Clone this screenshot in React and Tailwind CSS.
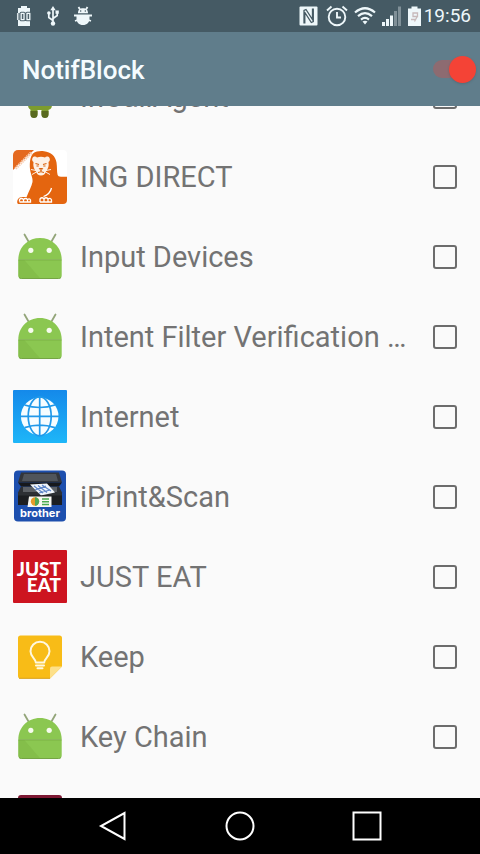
import React, { useLayoutEffect, useRef, useState } from 'react';

const AndroidIcon = () => (
  <svg viewBox="0 0 54 54" className="w-full h-full" aria-hidden="true">
    <path d="M11.5 4.5l4 7M42.5 4.5l-4 7" stroke="#93a579" strokeWidth="1.8" strokeLinecap="round" />
    <path d="M5.3 29.5C5.3 17.5 14.5 8 27 8s21.7 9.5 21.7 21.5z" fill="#8bc751" />
    <path d="M5.3 30h43.4v15.5a3 3 0 0 1-3 3H8.3a3 3 0 0 1-3-3z" fill="#8bc751" />
    <path d="M5.3 30h6l16 18.5h-19a3 3 0 0 1-3-3z" fill="#7cb342" opacity="0.45" />
    <path d="M5.3 29.8h43.4" stroke="#72a83c" strokeWidth="1" />
    <path d="M6 47.5a3 3 0 0 0 2.3 1h37.4a3 3 0 0 0 2.3-1" stroke="#74a544" strokeWidth="1" fill="none" />
    <circle cx="17.8" cy="20.3" r="2.6" fill="#f7fbef" />
    <circle cx="36.2" cy="20.3" r="2.6" fill="#f7fbef" />
  </svg>
);

const OldAndroidIcon = () => (
  <svg viewBox="0 0 54 54" className="w-full h-full" aria-hidden="true">
    <path d="M14 14a13 12 0 0 1 26 0z" fill="#8aa83a" />
    <path d="M15 16h24v19q0 5-5 5H20q-5 0-5-5z" fill="#7d9c2e" />
    <path d="M17.5 36h7v8a3.500 3.500 0 0 1-7 0zM28.5 36h7v8a3.500 3.500 0 0 1-7 0z" fill="#7d9c2e" />
    <path d="M17.5 41h7v3.500a3.500 3.500 0 0 1-7 0zM28.5 41h7v3.500a3.500 3.500 0 0 1-7 0z" fill="#59691f" />
  </svg>
);

const IngIcon = () => (
  <svg viewBox="0 0 54 54" className="w-full h-full" aria-hidden="true">
    <rect width="54" height="54" rx="4" fill="#ffffff" />
    <path d="M0 20V5a5 5 0 0 1 5-5h16z" fill="#e4691f" />
    <path d="M2.5 18.5L18.5 2.5" stroke="#f7cdb2" strokeWidth="3" strokeDasharray="1.5 0.8" />
    <path
      d="M20 3.500C23 1.200 27 .8 31 1.200c7 .6 11.500 5 12.500 11.300.7 4.500.3 9 1 12 .4 1.700 1.500 2.200 3.500 2.200h6V50a4 4 0 0 1-4 4H5.500C3.500 54 4 49.500 6 48c1.500-1 4.500-1 7.500-.8C16 41 18.500 36.500 19.500 32c.7-4-2-8-2.500-13-.5-6 0-12 3-15.500z"
      fill="#e4650f"
    />
    <path
      d="M19.500 8c1-2 3.500-1.800 4.500-.6 2.500-1 5.500-1 8 0 1-1.200 3.500-1.400 4.500.6.800 1.700.3 3.200-1 4 .6 4-.2 6.500-2.200 9-1 3-2.800 4.500-5.300 4.500s-4.300-1.500-5.300-4.500c-2-2.500-2.800-5-2.200-9-1.300-.8-1.800-2.300-1-4z"
      fill="#fdf1e6"
    />
    <path d="M22.5 13.500l3.500 1M33.500 13.500l-3.500 1M23.500 16h2.200M30.300 16h2.200" stroke="#d8620f" strokeWidth="1.1" fill="none" />
    <path d="M26.300 18.500h3.400L28 20.500zM28 20v1.500M25 22.500q3-1.500 6 0" stroke="#d8620f" strokeWidth="1" fill="none" />
    <path d="M23 20.500l-5-1M23.500 22l-4.500 2.500M33 20.500l5-1M32.500 22l4.500 2.500" stroke="#fff" strokeWidth="0.9" />
    <path
      d="M38.500 38c-1 4.500-4 7-8 8.500M6.500 51.500v-2q2-2 4 0v2.500M10.500 49.500q2-2 4 0v2.500M14.500 49.500q2-1.500 3 .5v2H6.500M27 52v-3q2-2.500 4 0v3M31 49q2-2.500 4 0v3M35 49q3-1.500 3.500 1v2H27"
      stroke="#fff"
      strokeWidth="1.3"
      fill="none"
    />
  </svg>
);

const InternetIcon = () => (
  <svg viewBox="0 0 54 54" className="w-full h-full" aria-hidden="true">
    <defs>
      <linearGradient id="sky" x1="0" y1="0" x2="0" y2="1">
        <stop offset="0" stopColor="#1489ea" />
        <stop offset="1" stopColor="#1eb6f8" />
      </linearGradient>
    </defs>
    <rect width="54" height="53" rx="1" fill="url(#sky)" />
    <circle cx="26.7" cy="26.3" r="18.8" fill="#f6fdff" />
    <g stroke="#2099ea" strokeWidth="1.7" fill="none">
      <path d="M26.7 7v39M7 26.3h40M11.5 15q15.2 5 30.4 0M11.5 37.600q15.2-5 30.4 0" />
      <ellipse cx="26.7" cy="26.3" rx="11.5" ry="19.5" />
    </g>
  </svg>
);

const PrintIcon = () => (
  <svg viewBox="0 0 54 54" className="w-full h-full" aria-hidden="true">
    <rect x="1" y="0.5" width="52" height="51" rx="4" fill="#1d4fae" />
    <path d="M8 2.500h38l3 10H5z" fill="#33363b" />
    <path d="M11 4h32l2 7H9z" fill="#50555b" />
    <path d="M5 12.500h44l-3 4H8z" fill="#17191c" />
    <path d="M8 16.500h38l3 6v12.500H5V22.500z" fill="#2d3034" />
    <path d="M10 17h34v5H10z" fill="#5c6065" />
    <path d="M17 14.500l17-1 8 9-14 3z" fill="#f0f5fb" />
    <path d="M21 16l9 7M25 15.500l9 7M29 15l9 6M22 20l11-4M26 23l11-3" stroke="#6288c9" strokeWidth="1.2" />
    <path d="M5 25.500h44V35H5z" fill="#1c1e21" />
    <path d="M16 26.500h22.5V37H14.5z" fill="#f8f8f3" />
    <circle cx="22" cy="31.5" r="4.2" fill="#e79b28" />
    <path d="M22 31.500v-4.200a4.200 4.200 0 0 1 0 8.400z" fill="#4fa956" />
    <path d="M29 29h7M29 31.800h7M29 34.500h7" stroke="#4bab50" strokeWidth="1.5" />
    <text x="27" y="47" textAnchor="middle" fill="#fff" fontFamily="Inter, sans-serif" fontWeight="700" fontSize="11">
      brother
    </text>
  </svg>
);

const JustEatIcon = () => (
  <svg viewBox="0 0 54 54" className="w-full h-full" aria-hidden="true">
    <rect width="54" height="53" rx="1" fill="#cd1420" />
    <text fill="#fff" textAnchor="end" fontFamily="Lato, sans-serif" fontWeight="900" fontSize="19">
      <tspan x="48" y="26">JUST</tspan>
      <tspan x="48" y="42">EAT</tspan>
    </text>
  </svg>
);

const KeepIcon = () => (
  <svg viewBox="0 0 54 54" className="w-full h-full" aria-hidden="true">
    <path d="M7.5 5.500h39a2.500 2.500 0 0 1 2.500 2.500v28.500L37 48.500H7.500A2.500 2.500 0 0 1 5 46V8a2.500 2.500 0 0 1 2.500-2.500z" fill="#f8bc17" />
    <path d="M37 48.500V38.500a2 2 0 0 1 2-2h10z" fill="#fde08a" />
    <path d="M6 48.300h31" stroke="#d9a21c" strokeWidth="1" />
    <path d="M22.8 32.500c0-4-5.300-5.300-5.300-11.300a9.500 9.500 0 0 1 19 0c0 6-5.300 7.300-5.300 11.300z" fill="none" stroke="#fff8e0" strokeWidth="2" strokeLinejoin="round" />
    <path d="M23 35.500h8M24.500 38.200h5" stroke="#fff8e0" strokeWidth="2" strokeLinecap="round" />
  </svg>
);

const MaroonIcon = () => (
  <svg viewBox="0 0 54 54" className="w-full h-full" aria-hidden="true">
    <rect x="5" y="5" width="44" height="44" rx="3" fill="#7c1732" />
  </svg>
);

const apps = [
  { name: 'InCallAgent', Icon: OldAndroidIcon },
  { name: 'ING DIRECT', Icon: IngIcon },
  { name: 'Input Devices', Icon: AndroidIcon },
  { name: 'Intent Filter Verification Service', Icon: AndroidIcon },
  { name: 'Internet', Icon: InternetIcon },
  { name: 'iPrint&Scan', Icon: PrintIcon },
  { name: 'JUST EAT', Icon: JustEatIcon },
  { name: 'Keep', Icon: KeepIcon },
  { name: 'Key Chain', Icon: AndroidIcon },
  { name: '', Icon: MaroonIcon },
];

const StatusBar = () => (
  <div className="flex items-center justify-between h-8 shrink-0 pl-4 pr-[9px] bg-[#455a64] text-[#eef7fa]">
    <div className="flex items-center gap-[15px]">
      {/* Battery level */}
      <svg viewBox="0 0 16 20" className="w-4 h-5" fill="none" aria-hidden="true">
        <path d="M5 0h6v2h3v18H2V2h3z" fill="currentColor" />
        <g strokeLinejoin="round">
          <path d="M1.8 7v7M5.2 7.300h2.800v6.400H5.200zM11 7.300h2.800v6.400H11z" stroke="#4d616b" strokeWidth="3.2" />
          <path d="M1.8 7v7M5.2 7.300h2.800v6.400H5.200zM11 7.300h2.800v6.400H11z" stroke="currentColor" strokeWidth="1.3" />
        </g>
      </svg>
      {/* USB */}
      <svg viewBox="0 0 12 20" className="w-3 h-5" aria-hidden="true">
        <path d="M6 3v14M6 14.500L1.8 11.500V7.500M6 12.500l4.200-3V6" stroke="currentColor" strokeWidth="1.7" fill="none" />
        <path d="M6 0l2.700 4.200H3.300zM8.500 4.500h3.300v3.300H8.500z" fill="currentColor" />
        <circle cx="1.9" cy="7" r="1.8" fill="currentColor" />
        <circle cx="6" cy="17.5" r="2.2" fill="currentColor" />
      </svg>
      {/* USB debugging */}
      <svg viewBox="0 0 18 20" className="w-[18px] h-5" aria-hidden="true">
        <path d="M4.5 1l1.500 2.500M13.5 1L12 3.500M0 9.500h18M1 15l4-1.500M17 15l-4-1.500" stroke="currentColor" strokeWidth="1.8" />
        <path d="M4 7.300c0-3.600 2-5 5-5s5 1.400 5 5zM2.500 9H15.500v3.500c0 4-2.500 6.500-6.500 6.500s-6.500-2.500-6.500-6.500z" fill="currentColor" />
        <path d="M6.7 4.300v1.500M11.3 4.300v1.500" stroke="#455a64" strokeWidth="1.1" />
      </svg>
    </div>
    <div className="flex items-center gap-1.5">
      {/* NFC */}
      <svg viewBox="0 0 19 20" className="w-[19px] h-5 mr-0.5" aria-hidden="true">
        <rect x="0.5" y="0.5" width="18" height="19" rx="1" fill="currentColor" />
        <path d="M5 17.500V4.500l2-1 6.500 10V2.500M14.300 2.500v13l-2 1L5.800 6.500v11" stroke="#455a64" strokeWidth="1.3" fill="none" />
      </svg>
      {/* Alarm */}
      <svg viewBox="0 0 22 22" className="w-[22px] h-[22px]" aria-hidden="true">
        <circle cx="11" cy="12" r="8.3" stroke="currentColor" strokeWidth="1.9" fill="none" />
        <path d="M11 7v5.500h4M1 5.500L5.500 1.500M21 5.500L16.500 1.500" stroke="currentColor" strokeWidth="1.9" fill="none" />
      </svg>
      {/* Wifi */}
      <svg viewBox="0 0 22 20" className="w-[22px] h-5" aria-hidden="true">
        <path d="M1 6.500Q11-2 21 6.500M4 10.200q7-6 14 0M7 13.600q4-3.300 8 0" stroke="currentColor" strokeWidth="2.2" fill="none" />
        <path d="M8.5 15.500q2.500-1.500 5 0L11 18.500z" fill="currentColor" />
      </svg>
      {/* Signal */}
      <svg viewBox="0 0 20 20" className="w-5 h-5" aria-hidden="true">
        <path d="M0 16h3v4H0zM4 13h3v7H4zM8 9.500h3V20H8z" fill="currentColor" />
        <path d="M12 5h3v15h-3zM16 0.500h3V20h-3z" fill="currentColor" opacity="0.35" />
      </svg>
      {/* Battery */}
      <div className="flex items-center gap-[3px]">
        <svg viewBox="0 0 13 20" className="w-[13px] h-5" aria-hidden="true">
          <path d="M3.5 0.500h6v2H13V20H0V2.500h3.500z" fill="currentColor" />
          <path d="M9 7H5v3.500h4.500V7zM9.5 10l-3 5.500M3 13.500h5" stroke="#c7b9ba" strokeWidth="1.3" fill="none" />
        </svg>
        <span className="text-[19px] leading-5">19:56</span>
      </div>
    </div>
  </div>
);

const AppRow = ({ id, name, Icon }) => (
  <li>
    <label htmlFor={id} className="flex items-center h-20 pl-[13px] pr-[23px] cursor-pointer">
      <span className="w-[54px] h-[54px] shrink-0">
        <Icon />
      </span>
      <span className="flex-1 min-w-0 truncate ml-[13px] mr-4 text-[29px] leading-9 text-[#737373]">
        {name}
      </span>
      <input
        id={id}
        type="checkbox"
        className="appearance-none w-6 h-6 shrink-0 rounded-[3px] border-2 border-[#6c6c6c] checked:bg-[#f44336] checked:border-[#f44336]"
      />
    </label>
  </li>
);

const NavBar = () => (
  <nav className="flex items-center justify-center gap-[97px] h-14 shrink-0 bg-black text-white">
    <button type="button" aria-label="Back" className="w-[30px] h-[30px]">
      <svg viewBox="0 0 30 30" className="w-full h-full" fill="none" stroke="currentColor" strokeWidth="2">
        <path d="M26.5 2v26L3 15z" />
      </svg>
    </button>
    <button type="button" aria-label="Home" className="w-[30px] h-[30px]">
      <svg viewBox="0 0 30 30" className="w-full h-full" fill="none" stroke="currentColor" strokeWidth="2">
        <circle cx="15" cy="15" r="13.5" />
      </svg>
    </button>
    <button type="button" aria-label="Recent apps" className="w-[30px] h-[30px]">
      <svg viewBox="0 0 30 30" className="w-full h-full" fill="none" stroke="currentColor" strokeWidth="2">
        <path d="M1.5 1.500h27v27h-27z" />
      </svg>
    </button>
  </nav>
);

const App = () => {
  const [enabled, setEnabled] = useState(true);
  const listRef = useRef(null);

  // the list opens part-way down
  useLayoutEffect(() => {
    listRef.current.scrollTop = 49;
  }, []);

  return (
    <div className="flex flex-col h-screen bg-[#fafafa] font-['Roboto',sans-serif]">
      <StatusBar />

      {/* Toolbar */}
      <header className="flex items-center justify-between h-[74px] shrink-0 pl-[22px] pr-1 bg-[#607d8b]">
        <h1 className="pt-0.5 text-[26px] leading-8 font-medium text-[#f5fcff]">NotifBlock</h1>
        <input
          type="checkbox"
          role="switch"
          aria-label="Block notifications"
          checked={enabled}
          onChange={(e) => setEnabled(e.target.checked)}
          className="appearance-none flex items-center w-[43px] h-7 cursor-pointer before:w-full before:h-[18px] before:rounded-full before:bg-[#f44336]/30 after:w-[27px] after:h-[27px] after:shrink-0 after:-ml-[43px] checked:after:-ml-[27px] after:rounded-full after:bg-[#f44336] after:shadow-sm"
        />
      </header>

      <ul ref={listRef} className="flex-1 min-h-0 overflow-y-auto [scrollbar-width:none]">
        {apps.map((app, i) => (
          <AppRow key={i} id={`app-${i}`} {...app} />
        ))}
      </ul>

      <NavBar />
    </div>
  );
};

export default App;
